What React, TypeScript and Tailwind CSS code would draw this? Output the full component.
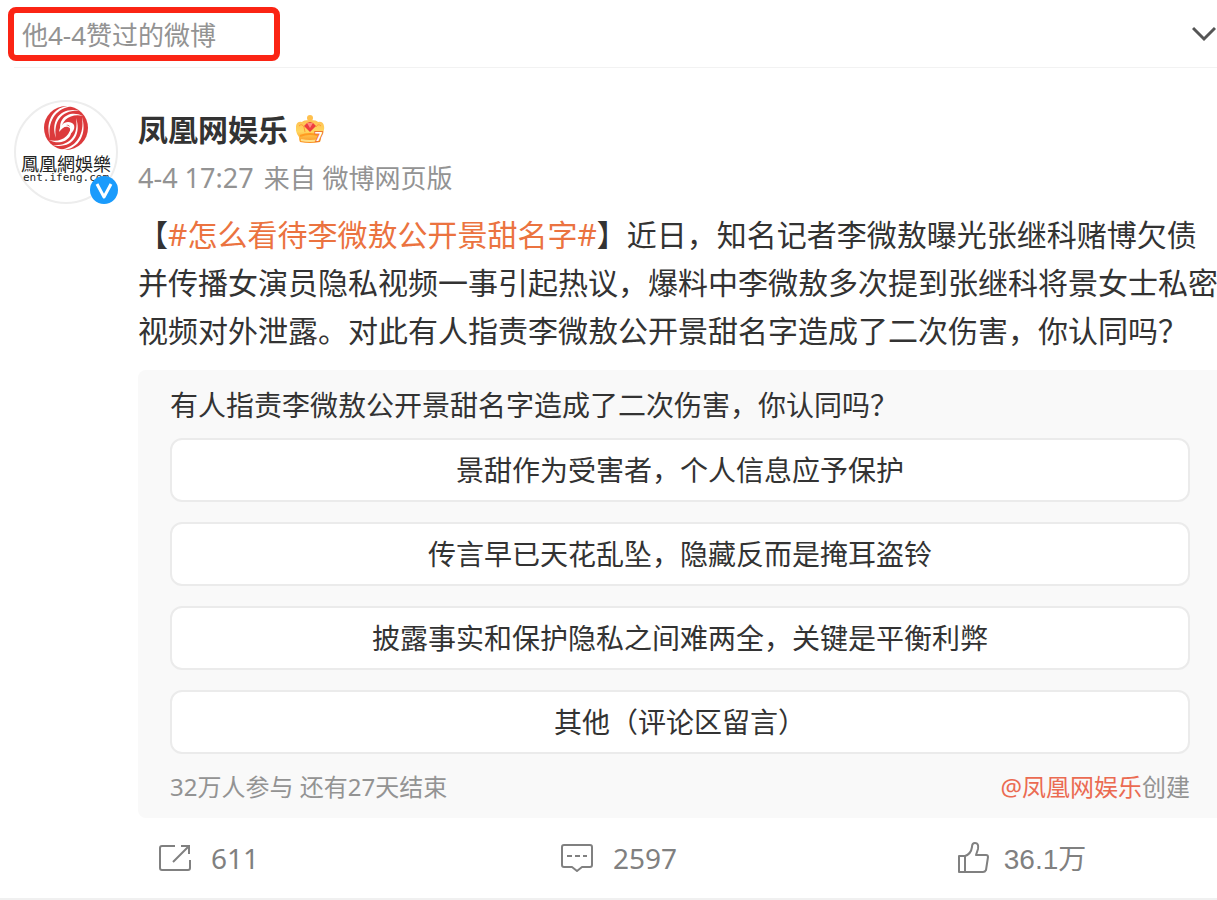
import React, { useState } from "react";

const POLL_OPTIONS = [
  "景甜作为受害者，个人信息应予保护",
  "传言早已天花乱坠，隐藏反而是掩耳盗铃",
  "披露事实和保护隐私之间难两全，关键是平衡利弊",
  "其他（评论区留言）",
];

// 凤凰标志半边的羽毛纹，另一半旋转 180° 得到
function Feathers() {
  return (
    <g>
      <path d="M8-22C-8-21-19-9-16 11C-22-9-10-24 8-22Z" />
      <path d="M15-17C-3-19-13-8-10 10C-16-7-6-22 15-17Z" />
      <path d="M17-12C5-15-5-8-5 3C-9-9 3-19 17-12Z" />
    </g>
  );
}

function PhoenixLogo() {
  return (
    <svg viewBox="-23 -23 46 46" className="h-[46px] w-[46px]" fill="#fff" aria-hidden="true">
      <circle r="22" fill="#dc3a3c" />
      <Feathers />
      <g transform="rotate(180)">
        <Feathers />
      </g>
      <path d="M-7 4C-6-4 0-8 6-5C10-3 9 4 2 7C5 3 5 0 2-1C-1-2-4 0-7 4Z" />
      <path d="M0-3q3-1 4 2-2-2-4-2Z" fill="#dc3a3c" />
    </svg>
  );
}

function Crown() {
  return (
    <svg viewBox="0 0 30 30" className="h-[30px] w-[30px]" aria-hidden="true">
      <defs>
        <linearGradient id="crown" x1="0" y1="0" x2="0" y2="1">
          <stop offset="0" stopColor="#ffbf52" />
          <stop offset="0.5" stopColor="#ffd65e" />
          <stop offset="1" stopColor="#fb9020" />
        </linearGradient>
      </defs>
      <circle cx="14" cy="3" r="3" fill="#ffc04d" />
      <path
        d="M4 27q-1-2-1-5Q-1 17 0 11 1 6 6 7q1-2 8-2t8 2q5-1 6 4 1 6-3 11 0 3-1 5-10 2-20 0Z"
        fill="url(#crown)"
      />
      <path d="M4 21q10-4 20 0" fill="none" stroke="#ff9b21" strokeWidth="2" />
      <path d="M5 25q9 2 18 0" fill="none" stroke="#ffe08a" strokeWidth="2" />
      <path d="M3 11q3-3 5 1l1 5M20 12q2-4 5-1" fill="none" stroke="#ff9836" />
      <path d="m11 8 3-1 3 1 3 3-6 6-6-6Z" fill="#ee3d3f" />
      <path d="M11 8h6l-3 5Z" fill="#ff8c7c" />
      <text
        x="19"
        y="26"
        className="font-['Open_Sans',sans-serif] text-[13px] font-bold"
        fill="#fff"
        stroke="#f0782d"
        strokeWidth="2"
        paintOrder="stroke"
      >
        7
      </text>
    </svg>
  );
}

function RepostIcon() {
  return (
    <svg viewBox="0 0 32 28" className="h-7 w-8" fill="none" stroke="currentColor" strokeWidth="2" aria-hidden="true">
      <path d="M16 2H3Q1 2 1 4v20q0 2 2 2h26q2 0 2-2v-8" />
      <path d="M14 18 30 2M22 2h8v8" />
    </svg>
  );
}

function CommentIcon() {
  return (
    <svg viewBox="0 0 32 28" className="h-7 w-8" fill="none" stroke="currentColor" strokeWidth="2" aria-hidden="true">
      <path d="M3 1h26q2 0 2 2v18q0 2-2 2h-8l-5 4-5-4H3q-2 0-2-2V3q0-2 2-2Z" strokeLinejoin="round" />
      <path d="M6 12h5M14 12h5M22 12h4" />
    </svg>
  );
}

function LikeIcon() {
  return (
    <svg viewBox="0 0 32 32" className="h-8 w-8" fill="none" stroke="currentColor" strokeWidth="2" strokeLinejoin="round" aria-hidden="true">
      <path d="M1 14h6q6-2 7-9 0-4 3-4 4 0 3 6l-2 6h10q2 0 2 2l-2 13q-1 2-3 2H1Z" />
      <path d="M7 14v16" />
    </svg>
  );
}

export default function App() {
  const [selected, setSelected] = useState<number | null>(null);

  return (
    <div className="overflow-hidden bg-white font-['Noto_Sans','Noto_Sans_CJK_SC',sans-serif] text-[#333]">
      {/* 顶部标题 */}
      <header className="flex items-center justify-between pt-[7px] pr-px pb-[6px] pl-2">
        <h1 className="flex h-[54px] w-68 items-center rounded-lg border-6 border-[#fb2414] pt-0.5 pl-2 text-[26px] text-[#939393]">
          他4-4赞过的微博
        </h1>
        <button type="button" aria-label="更多">
          <svg viewBox="0 0 24 16" className="h-4 w-6" fill="none" stroke="#555" strokeWidth="3" aria-hidden="true">
            <path d="m1 2 11 11L23 2" />
          </svg>
        </button>
      </header>
      <div className="ml-[14px] h-px bg-[#f2f2f2]" />

      <article className="flex gap-5 border-b-2 border-[#f0f0f0] pt-8 pl-[14px]">
        {/* 头像 */}
        <a href="#" className="relative flex h-26 w-26 shrink-0 flex-col items-center rounded-full border-2 border-[#ededed] pt-[3px]">
          <PhoenixLogo />
          <span className="mt-0.5 font-['Noto_Sans_CJK_TC',serif] text-[18px] leading-5 whitespace-nowrap text-[#222]">鳳凰網娛樂</span>
          <span className="font-['DejaVu_Sans_Mono',monospace] text-[11px] leading-[10px] whitespace-nowrap text-[#222]">ent.ifeng.com</span>
          <svg viewBox="0 0 28 28" className="absolute -right-0.5 -bottom-0.5 h-7 w-7" aria-hidden="true">
            <circle cx="14" cy="14" r="14" fill="#1a9bfc" />
            <path d="m7 8 7 13 7-13" fill="none" stroke="#fff" strokeWidth="3" strokeLinejoin="round" />
          </svg>
        </a>

        <div className="min-w-0 flex-1 pt-2">
          <div className="flex items-center gap-2">
            <a href="#" className="text-[30px] leading-11 font-bold">凤凰网娱乐</a>
            <Crown />
          </div>
          <div className="flex gap-[10px] text-[26px] leading-[52px] text-[#939393]">
            <a href="#" className="text-[27px]">4-4 17:27</a>
            <span>来自 微博网页版</span>
          </div>

          <p className="mt-[7px] -mr-1 text-[30px] leading-12">
            【<a href="#" className="text-[#eb7340]">#怎么看待李微敖公开景甜名字#</a>】近日，知名记者李微敖曝光张继科赌博欠债并传播女演员隐私视频一事引起热议，爆料中李微敖多次提到张继科将景女士私密视频对外泄露。对此有人指责李微敖公开景甜名字造成了二次伤害，你认同吗？
          </p>

          {/* 投票 */}
          <section className="mt-[15px] rounded-l-lg bg-[#f9f9f9] pt-3 pr-[27px] pb-[7px] pl-8">
            <h2 className="text-[28px] leading-[46px]">有人指责李微敖公开景甜名字造成了二次伤害，你认同吗？</h2>
            <div className="mt-[10px] flex flex-col gap-5">
              {POLL_OPTIONS.map((option, i) => (
                <button
                  key={option}
                  type="button"
                  aria-pressed={selected === i}
                  onClick={() => setSelected(i)}
                  className="h-16 rounded-xl border-2 border-[#ebebeb] bg-white text-[28px]"
                >
                  {option}
                </button>
              ))}
            </div>
            <div className="mt-[9px] flex justify-between text-[24px] leading-12 text-[#939393]">
              <span>32万人参与 还有27天结束</span>
              <span>
                <a href="#" className="text-[#eb6b52]">@凤凰网娱乐</a>创建
              </span>
            </div>
          </section>

          {/* 转发 / 评论 / 点赞 */}
          <footer className="grid h-20 grid-cols-[76fr_75fr_49fr] items-center pl-[21px] text-[28px] text-[#808080]">
            <button type="button" aria-label="转发 611" className="flex items-center gap-5">
              <RepostIcon />
              611
            </button>
            <button type="button" aria-label="评论 2597" className="flex items-center gap-5">
              <CommentIcon />
              2597
            </button>
            <button type="button" aria-label="赞 36.1万" className="flex items-center gap-[14px] font-['Liberation_Sans','Noto_Sans_CJK_SC',sans-serif]">
              <LikeIcon />
              <span className="pt-1">36.1万</span>
            </button>
          </footer>
        </div>
      </article>
    </div>
  );
}
